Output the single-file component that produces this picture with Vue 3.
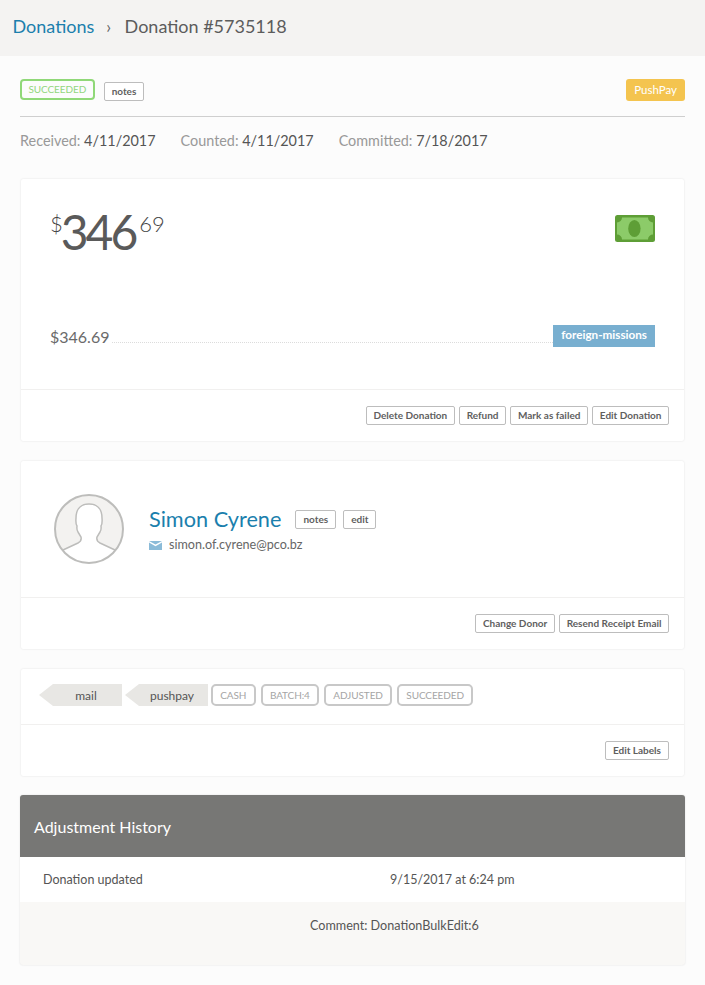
<script setup>
const dates = [
  { label: 'Received:', value: '4/11/2017' },
  { label: 'Counted:', value: '4/11/2017' },
  { label: 'Committed:', value: '7/18/2017' },
]
const donationActions = ['Delete Donation', 'Refund', 'Mark as failed', 'Edit Donation']
const donorActions = ['Change Donor', 'Resend Receipt Email']
const arrowLabels = ['mail', 'pushpay']
const plainLabels = ['CASH', 'BATCH:4', 'ADJUSTED', 'SUCCEEDED']
</script>

<template>
  <div class="page">
    <header class="crumbs">
      <a class="crumb-link">Donations</a>
      <span class="crumb-sep">›</span>
      <span class="crumb-current">Donation #5735118</span>
    </header>

    <main class="content">
      <div class="status-row">
        <span class="status">SUCCEEDED</span>
        <button class="btn wide">notes</button>
        <span class="source">PushPay</span>
      </div>

      <div class="dates">
        <span v-for="d in dates" :key="d.label" class="date">
          {{ d.label }} <b>{{ d.value }}</b>
        </span>
      </div>

      <section class="card">
        <div class="amount-body">
          <div class="amount-top">
            <div class="amount">
              <span class="cur">$</span><span class="whole">346</span><span class="cents">69</span>
            </div>
            <svg class="bill" width="40" height="27" viewBox="0 0 40 27">
              <rect width="40" height="27" rx="2.5" fill="#5e9e36" />
              <path d="M7 2.5H33A5 5 0 0 0 38 7.5V19.5A5 5 0 0 0 33 24.5H7A5 5 0 0 0 2 19.5V7.5A5 5 0 0 0 7 2.5z" fill="#8ccb69" />
              <ellipse cx="19.4" cy="13.5" rx="6.2" ry="8.6" fill="#5e9e36" />
            </svg>
          </div>
          <div class="fund-row">
            <span class="fund-amount">$346.69</span>
            <span class="dots"></span>
            <span class="fund">foreign-missions</span>
          </div>
        </div>
        <div class="card-foot">
          <button v-for="a in donationActions" :key="a" class="btn">{{ a }}</button>
        </div>
      </section>

      <section class="card">
        <div class="donor-body">
          <svg class="avatar" width="70" height="70" viewBox="0 0 70 70">
            <circle cx="35" cy="35" r="34" fill="#f3f2f0" />
            <path d="M9 56L24 49Q28 47 27 43L24 38Q22.5 36 23 32Q21.5 30 22 24C22 14 28 10 35 10C42 10 48 14 48 24Q48.5 30 47 32Q47.5 36 46 38L43 43Q42 47 46 49L61 56A33 33 0 0 1 9 56z" fill="#fff" />
            <path d="M9 56L24 49Q28 47 27 43L24 38Q22.5 36 23 32Q21.5 30 22 24C22 14 28 10 35 10C42 10 48 14 48 24Q48.5 30 47 32Q47.5 36 46 38L43 43Q42 47 46 49L61 56" fill="none" stroke="#bdbdbb" stroke-width="1.5" />
            <circle cx="35" cy="35" r="34" fill="none" stroke="#bdbdbb" stroke-width="2" />
          </svg>
          <div class="donor-info">
            <div class="donor-top">
              <a class="donor-name">Simon Cyrene</a>
              <button class="btn wide">notes</button>
              <button class="btn wide">edit</button>
            </div>
            <div class="donor-mail">
              <svg width="13" height="9" viewBox="0 0 13 9">
                <path d="M0 0h13L6.5 3.6z" fill="#8bbbd8" />
                <path d="M0 1.6l6.5 3.6L13 1.6V9H0z" fill="#8bbbd8" />
              </svg>
              <span>simon.of.cyrene@pco.bz</span>
            </div>
          </div>
        </div>
        <div class="card-foot">
          <button v-for="a in donorActions" :key="a" class="btn">{{ a }}</button>
        </div>
      </section>

      <section class="card last">
        <div class="labels">
          <span v-for="l in arrowLabels" :key="l" class="tag">{{ l }}</span>
          <span v-for="l in plainLabels" :key="l" class="chip">{{ l }}</span>
        </div>
        <div class="card-foot">
          <button class="btn wide">Edit Labels</button>
        </div>
      </section>

      <section class="history">
        <h2 class="history-head">Adjustment History</h2>
        <div class="history-row">
          <span class="history-what">Donation updated</span>
          <span>9/15/2017 at 6:24 pm</span>
        </div>
        <div class="history-note">Comment: DonationBulkEdit:6</div>
      </section>
    </main>
  </div>
</template>

<style>
html, body {
  background: #fcfcfc;
}
</style>

<style scoped>
.page {
  font-family: Lato, "Open Sans", sans-serif;
  color: #555;
  background: #fcfcfc;
  height: 985px;
  overflow: hidden;
}

.crumbs {
  height: 56px;
  box-sizing: border-box;
  padding: 15px 12.5px 0;
  background: #f4f3f2;
  font-size: 18px;
  line-height: 23px;
  display: flex;
}
.crumb-link { color: #1b7fad; }
.crumb-sep { margin: 0 13.5px 0 12px; color: #666; font-size: 17px; }
.crumb-current { color: #5c5c5c; }

.content { padding: 0 20px; }

.status-row {
  display: flex;
  align-items: flex-start;
  height: 61px;
  box-sizing: border-box;
  padding-top: 23px;
  border-bottom: 1px solid #cfcfcf;
}
.status {
  height: 21px;
  box-sizing: border-box;
  padding: 0 6.5px;
  border: 2px solid #90d878;
  border-radius: 4px;
  color: #92d67c;
  font-size: 10px;
  line-height: 17px;
  letter-spacing: -.1px;
  margin-right: 9px;
}
.status-row .btn { margin-top: 3px; }
.source {
  margin-left: auto;
  height: 22px;
  padding: 0 8px;
  background: #f4c44f;
  border-radius: 3px;
  color: #fff;
  font-size: 11.5px;
  line-height: 22px;
}

.btn {
  font-family: inherit;
  height: 19px;
  padding: 0 6.5px;
  background: #fff;
  border: 1px solid #bdbdbd;
  border-radius: 2px;
  color: #5f5f5f;
  font-size: 10px;
  font-weight: 700;
  line-height: 17px;
}
.btn.wide { padding: 0 7px; }

.dates {
  display: flex;
  gap: 25px;
  padding-top: 15px;
  height: 47px;
  font-size: 14.4px;
  line-height: 17px;
  color: #999;
}
.dates b { font-weight: 400; color: #555; }

.card {
  background: #fff;
  border-radius: 2px;
  box-shadow: 0 0 2px rgba(0, 0, 0, .12);
  margin: 0 1px 20px;
}
.card.last { margin-bottom: 19px; }
.card-foot {
  display: flex;
  justify-content: flex-end;
  gap: 4.4px;
  border-top: 1px solid #f1f0ef;
  padding: 16px 15px 16px;
}

.amount-body {
  height: 210px;
  box-sizing: border-box;
  padding: 30px 29px 0;
}
.amount-top {
  display: flex;
  justify-content: space-between;
  align-items: flex-start;
  height: 116px;
}
.amount {
  display: flex;
  align-items: flex-start;
}
.cur { font-size: 22px; line-height: 30px; font-weight: 300; color: #444; letter-spacing: -2px; }
.whole { font-size: 48px; line-height: 46px; letter-spacing: -3px; color: #5a5a5a; }
.cents { font-size: 22px; line-height: 30px; font-weight: 300; color: #444; margin-left: 4px; }
.bill { margin-top: 6px; }

.fund-row { display: flex; align-items: flex-end; }
.fund-amount { font-size: 16px; line-height: 22px; margin-bottom: -1px; color: #6a6a6a; }
.dots {
  flex: 1;
  margin: 0 0 4px 3px;
  border-top: 1px dotted #dcdcdc;
}
.fund {
  height: 22px;
  padding: 0 8px;
  background: #78afd0;
  color: #fff;
  font-size: 11.7px;
  font-weight: 700;
  line-height: 19px;
}

.donor-body {
  height: 136px;
  box-sizing: border-box;
  padding: 33px 0 0 33px;
  display: flex;
}
.donor-info { margin-left: 25px; padding-top: 12px; }
.donor-top { display: flex; align-items: center; gap: 7px; }
.donor-name { color: #1b7fad; font-size: 21.7px; line-height: 27px; margin-right: 7px; }
.donor-mail {
  display: flex;
  align-items: center;
  gap: 7px;
  margin-top: 4px;
  font-size: 12.6px;
  line-height: 16px;
  color: #666;
}

.labels {
  display: flex;
  gap: 5px;
  height: 55px;
  box-sizing: border-box;
  padding: 15px 0 0 18px;
}
.tag {
  width: 83px;
  height: 22px;
  margin-right: -2px;
  box-sizing: border-box;
  padding-left: 11px;
  text-align: center;
  background: #e8e7e4;
  clip-path: polygon(0 50%, 14px 0, 100% 0, 100% 100%, 14px 100%);
  color: #555;
  font-size: 12px;
  line-height: 24px;
}
.chip {
  height: 22px;
  box-sizing: border-box;
  padding: 0 7.25px;
  border: 2px solid #c8c8c8;
  border-radius: 5px;
  color: #a5a5a5;
  font-size: 10px;
  line-height: 18px;
  letter-spacing: -.1px;
}

.history {
  border-radius: 3px;
  background: #f9f8f6;
  box-shadow: 0 0 2px rgba(0, 0, 0, .12);
  overflow: hidden;
}
.history-head {
  margin: 0;
  height: 62px;
  padding-left: 14px;
  background: #777775;
  color: #fff;
  font-size: 16px;
  font-weight: 400;
  line-height: 64px;
}
.history-row {
  height: 45px;
  display: flex;
  background: #fff;
  font-size: 12.5px;
  line-height: 45px;
  padding-left: 23px;
}
.history-what { width: 347px; }
.history-note {
  height: 63px;
  padding: 16px 0 0 290px;
  box-sizing: border-box;
  font-size: 12.6px;
  line-height: 16px;
}
</style>
